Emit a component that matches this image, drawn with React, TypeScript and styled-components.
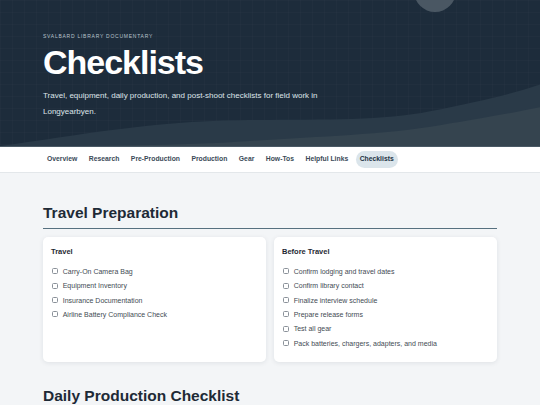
import styled, { createGlobalStyle } from "styled-components";

const GlobalStyle = createGlobalStyle`
  html, body {
    margin: 0;
    padding: 0;
    background: #f3f5f7;
    font-family: "Liberation Sans", Arial, sans-serif;
  }
  * { box-sizing: border-box; }
`;

const navItems = [
  "Overview",
  "Research",
  "Pre-Production",
  "Production",
  "Gear",
  "How-Tos",
  "Helpful Links",
  "Checklists",
];

const travel = [
  "Carry-On Camera Bag",
  "Equipment Inventory",
  "Insurance Documentation",
  "Airline Battery Compliance Check",
];

const beforeTravel = [
  "Confirm lodging and travel dates",
  "Confirm library contact",
  "Finalize interview schedule",
  "Prepare release forms",
  "Test all gear",
  "Pack batteries, chargers, adapters, and media",
];

const Checklist = ({ title, items }: { title: string; items: string[] }) => (
  <Card>
    <CardTitle>{title}</CardTitle>
    <ItemList>
      {items.map((item) => (
        <Item key={item}>
          <Box type="checkbox" />
          <span>{item}</span>
        </Item>
      ))}
    </ItemList>
  </Card>
);

const App = (): JSX.Element => {
  return (
    <>
      <GlobalStyle />
      <Hero>
        <Moon />
        <Waves viewBox="0 0 540 147" preserveAspectRatio="none">
          <path
            d="M0 147 C 80 136, 150 122, 240 121 C 320 120, 380 122, 430 112 C 480 102, 510 95, 540 85 L 540 147 Z"
            fill="#2a3a48"
          />
          <path
            d="M0 147 C 100 147, 180 147, 250 142 C 320 137, 380 136, 440 126 C 490 118, 520 112, 540 108 L 540 147 Z"
            fill="#35444f"
          />
        </Waves>
        <HeroInner>
          <Kicker>Svalbard Library Documentary</Kicker>
          <Title>Checklists</Title>
          <Lead>
            Travel, equipment, daily production, and post-shoot checklists for
            field work in Longyearbyen.
          </Lead>
        </HeroInner>
      </Hero>
      <Nav>
        {navItems.map((n) => (
          <NavLink key={n} $active={n === "Checklists"}>
            {n}
          </NavLink>
        ))}
      </Nav>
      <Main>
        <Section>
          <SectionTitle>Travel Preparation</SectionTitle>
          <CardGrid>
            <Checklist title="Travel" items={travel} />
            <Checklist title="Before Travel" items={beforeTravel} />
          </CardGrid>
        </Section>
        <Section>
          <SectionTitle>Daily Production Checklist</SectionTitle>
        </Section>
      </Main>
    </>
  );
};

export default App;

const Hero = styled.header`
  position: relative;
  overflow: hidden;
  height: 147px;
  background-color: #1d2c3b;
  background-image: linear-gradient(rgba(255, 255, 255, 0.015) 1px, transparent 1px),
    linear-gradient(90deg, rgba(255, 255, 255, 0.015) 1px, transparent 1px);
  background-size: 12px 12px;
  border-bottom: 1px solid #4a5965;
`;

const Moon = styled.div`
  position: absolute;
  left: 414px;
  top: -30px;
  width: 42px;
  height: 42px;
  border-radius: 50%;
  background: #4a5763;
`;

const Waves = styled.svg`
  position: absolute;
  left: 0;
  bottom: 0;
  width: 100%;
  height: 100%;
`;

const HeroInner = styled.div`
  position: relative;
  padding: 32px 43px 0;
`;

const Kicker = styled.div`
  font-size: 5px;
  line-height: 8px;
  letter-spacing: 0.15em;
  text-transform: uppercase;
  color: #b9c3cb;
`;

const Title = styled.h1`
  margin: 2px 0 0;
  font-size: 34px;
  line-height: 40px;
  font-weight: 700;
  letter-spacing: -0.03em;
  color: #ffffff;
`;

const Lead = styled.p`
  margin: 6px 0 0;
  max-width: 300px;
  font-size: 8px;
  line-height: 15.5px;
  color: #dde4e9;
`;

const Nav = styled.nav`
  display: flex;
  align-items: center;
  gap: 3.5px;
  height: 25.5px;
  padding: 0 43px;
  background: #ffffff;
  border-bottom: 1px solid #e3e7ea;
`;

const NavLink = styled.a<{ $active?: boolean }>`
  padding: 4px;
  border-radius: 999px;
  font-size: 6.8px;
  line-height: 8.5px;
  font-weight: 700;
  color: ${(p) => (p.$active ? "#223344" : "#3b4a58")};
  background: ${(p) => (p.$active ? "#dbe5eb" : "transparent")};
`;

const Main = styled.main`
  padding: 31px 43px 0;
`;

const Section = styled.section`
  margin-bottom: 25px;
`;

const SectionTitle = styled.h2`
  margin: 0 0 8px;
  padding-bottom: 6px;
  font-size: 15.5px;
  line-height: 18.6px;
  font-weight: 700;
  color: #1e2a36;
  border-bottom: 1.5px solid #56707f;
`;

const CardGrid = styled.div`
  display: grid;
  grid-template-columns: 1fr 1fr;
  gap: 8px;
`;

const Card = styled.div`
  background: #ffffff;
  border-radius: 5px;
  padding: 10px 8px 12px;
  box-shadow: 0 1px 5px rgba(20, 35, 50, 0.09);
`;

const CardTitle = styled.h3`
  margin: 0 0 8px;
  font-size: 7.5px;
  line-height: 9px;
  font-weight: 700;
  color: #1f2933;
`;

const ItemList = styled.ul`
  list-style: none;
  margin: 0;
  padding: 0;
`;

const Item = styled.li`
  display: flex;
  align-items: center;
  gap: 4.7px;
  height: 14.4px;
  font-size: 7px;
  color: #434b54;
`;

const Box = styled.input`
  appearance: none;
  margin: 0 0 0 1px;
  width: 6px;
  height: 6px;
  border: 0.8px solid #8a9199;
  border-radius: 1.5px;
  background: #ffffff;
`;
